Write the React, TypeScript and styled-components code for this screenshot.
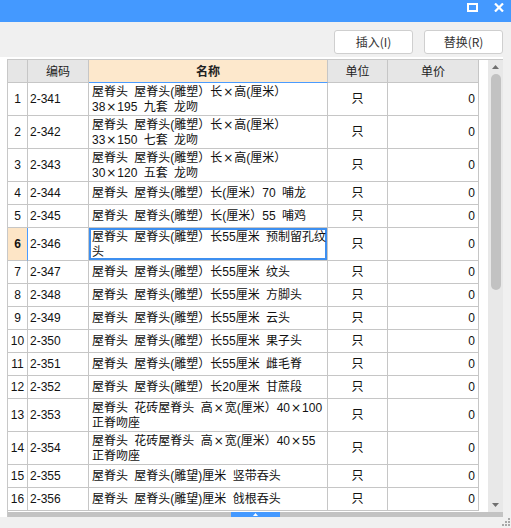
import React from "react";
import styled, { createGlobalStyle, css } from "styled-components";

const Global = createGlobalStyle`
  html, body { margin: 0; padding: 0; background: #f0f0f0; }
  body { font-family: "Liberation Sans", "Noto Sans CJK SC", sans-serif; font-size: 12px; color: #222; }
  * { box-sizing: border-box; }
`;

const Window = styled.div`
  width: 511px;
  height: 528px;
  display: flex;
  flex-direction: column;
  background: #f0f0f0;
  overflow: hidden;
`;

const TitleBar = styled.div`
  height: 22px;
  flex: none;
  background: #4499ff;
  display: flex;
  justify-content: flex-end;
  align-items: flex-start;
  gap: 16px;
  padding: 3px 7px 0 0;
`;

const IconSvg = styled.svg`
  display: block;
`;

const Toolbar = styled.div`
  height: 35px;
  flex: none;
  display: flex;
  justify-content: flex-end;
  align-items: flex-start;
  gap: 11px;
  padding: 8px 8px 0 0;
`;

const Button = styled.button`
  width: 79px;
  height: 24px;
  background: #fff;
  border: 1px solid #cfcfcf;
  border-radius: 3px;
  font-family: "Noto Sans CJK SC", "Noto Sans", sans-serif;
  font-size: 12px;
  color: #333;
  padding: 0;
  line-height: 22px;
`;

const Main = styled.div`
  flex: 1;
  display: flex;
  padding-right: 8px;
  min-height: 0;
`;

const Panel = styled.div`
  flex: 1;
  background: #fff;
  padding: 2px 0 0 7px;
  display: flex;
  min-height: 0;
`;

const Frame = styled.div`
  flex: 1;
  border-left: 1px solid #c8c8c8;
  border-top: 1px solid #c8c8c8;
  display: grid;
  grid-template-columns: 1fr 15px;
  grid-template-rows: 1fr 5px;
  min-height: 0;
`;

const GridArea = styled.div`
  overflow: hidden;
  min-height: 0;
`;

const COLS = "20px 61px 239px 60px 91px";

const Row = styled.div<{ $h: number }>`
  display: grid;
  grid-template-columns: ${COLS};
  height: ${(p) => p.$h}px;
`;

const cellBase = css`
  border-right: 1px solid #c6c6c6;
  border-bottom: 1px solid #c6c6c6;
  display: flex;
  align-items: center;
  white-space: nowrap;
  overflow: hidden;
  line-height: 15px;
  color: #111;
`;

const HeadCell = styled.div<{ $active?: boolean }>`
  ${cellBase};
  justify-content: center;
  font-family: "Noto Sans CJK SC", sans-serif;
  line-height: 16px;
  background: ${(p) => (p.$active ? "#fde8cc" : "#e6e6e6")};
  color: #222;
  font-weight: ${(p) => (p.$active ? 700 : 400)};
  ${(p) => p.$active && css`border-bottom: 1px solid #4a9bff;`}
`;

const NumCell = styled.div<{ $sel?: boolean }>`
  ${cellBase};
  justify-content: center;
  background: ${(p) => (p.$sel ? "#fde5c6" : "#fff")};
  font-weight: ${(p) => (p.$sel ? 700 : 400)};
  ${(p) => p.$sel && css`border-right: 1px solid #4a9bff;`}
`;

const CodeCell = styled.div`
  ${cellBase};
  padding-left: 2px;
`;

const NameCell = styled.div<{ $sel?: boolean }>`
  ${cellBase};
  padding-left: 3px;
  word-spacing: 3px;
  ${(p) => p.$sel && css`box-shadow: inset 0 0 0 2px #3d8ff0;`}
`;

const Lines = styled.div`
  display: flex;
  flex-direction: column;
  padding-top: 1px;
`;

const Line = styled.span`
  display: block;
  height: 15px;
`;

const Times = styled.span`
  display: inline-block;
  width: 12px;
  text-align: center;
  font-family: "DejaVu Sans", sans-serif;
  font-size: 12px;
  line-height: 12px;
`;

const UnitCell = styled.div`
  ${cellBase};
  justify-content: center;
`;

const PriceCell = styled.div`
  ${cellBase};
  justify-content: flex-end;
  padding-right: 3px;
`;

const VScroll = styled.div`
  background: #e8e8e8;
  display: flex;
  flex-direction: column;
  align-items: center;
  padding: 5px 0 5px;
`;

const Thumb = styled.div`
  width: 10px;
  height: 216px;
  margin-top: 5px;
  border-radius: 5px;
  background: #c2c2c2;
`;

const Spacer = styled.div`
  flex: 1;
`;

const HScroll = styled.div`
  grid-column: 1 / span 2;
  background: #c3c3c3;
  display: flex;
  justify-content: center;
`;

const Handle = styled.div`
  width: 49px;
  height: 5px;
  background: #4499ff;
  display: flex;
  justify-content: center;
  align-items: center;
`;

const Footer = styled.div`
  height: 11px;
  flex: none;
  display: flex;
  justify-content: flex-end;
  align-items: flex-end;
  padding: 0 1px 2px 0;
`;

type R = { n: number; code: string; name: string[] };

const A = "屋脊头 屋脊头(雕塑）";
const rows: R[] = [
  { n: 1, code: "2-341", name: [A + "长×高(厘米）", "38×195 九套 龙吻"] },
  { n: 2, code: "2-342", name: [A + "长×高(厘米）", "33×150 七套 龙吻"] },
  { n: 3, code: "2-343", name: [A + "长×高(厘米）", "30×120 五套 龙吻"] },
  { n: 4, code: "2-344", name: [A + "长(厘米）70 哺龙"] },
  { n: 5, code: "2-345", name: [A + "长(厘米）55 哺鸡"] },
  { n: 6, code: "2-346", name: [A + "长55厘米 预制留孔纹", "头"] },
  { n: 7, code: "2-347", name: [A + "长55厘米 纹头"] },
  { n: 8, code: "2-348", name: [A + "长55厘米 方脚头"] },
  { n: 9, code: "2-349", name: [A + "长55厘米 云头"] },
  { n: 10, code: "2-350", name: [A + "长55厘米 果子头"] },
  { n: 11, code: "2-351", name: [A + "长55厘米 雌毛脊"] },
  { n: 12, code: "2-352", name: [A + "长20厘米 甘蔗段"] },
  { n: 13, code: "2-353", name: ["屋脊头 花砖屋脊头 高×宽(厘米）40×100", "正脊吻座"] },
  { n: 14, code: "2-354", name: ["屋脊头 花砖屋脊头 高×宽(厘米）40×55", "正脊吻座"] },
  { n: 15, code: "2-355", name: ["屋脊头 屋脊头(雕望)厘米 竖带吞头"] },
  { n: 16, code: "2-356", name: ["屋脊头 屋脊头(雕望)厘米 戗根吞头"] },
];

const SELECTED = 6;

function renderLine(text: string) {
  const parts = text.split("×");
  const out: React.ReactNode[] = [];
  parts.forEach((p, i) => {
    if (i > 0) out.push(<Times key={"t" + i}>×</Times>);
    out.push(p);
  });
  return out;
}

export default function App() {
  return (
    <>
      <Global />
      <Window>
        <TitleBar>
          <IconSvg width="11" height="9" viewBox="0 0 11 9">
            <rect x="1" y="1" width="9" height="7" fill="none" stroke="#fff" strokeWidth="2" />
          </IconSvg>
          <IconSvg width="10" height="9" viewBox="0 0 10 9">
            <path d="M1 0.5 L9 8.5 M9 0.5 L1 8.5" stroke="#fff" strokeWidth="2.2" />
          </IconSvg>
        </TitleBar>
        <Toolbar>
          <Button>插入(I)</Button>
          <Button>替换(R)</Button>
        </Toolbar>
        <Main>
          <Panel>
            <Frame>
              <GridArea>
                <Row $h={23}>
                  <HeadCell />
                  <HeadCell>编码</HeadCell>
                  <HeadCell $active>名称</HeadCell>
                  <HeadCell>单位</HeadCell>
                  <HeadCell>单价</HeadCell>
                </Row>
                {rows.map((r) => {
                  const sel = r.n === SELECTED;
                  return (
                    <Row key={r.n} $h={r.name.length > 1 ? 33 : 23}>
                      <NumCell $sel={sel}>{r.n}</NumCell>
                      <CodeCell>{r.code}</CodeCell>
                      <NameCell $sel={sel}>
                        <Lines>
                          {r.name.map((l, i) => (
                            <Line key={i}>{renderLine(l)}</Line>
                          ))}
                        </Lines>
                      </NameCell>
                      <UnitCell>只</UnitCell>
                      <PriceCell>0</PriceCell>
                    </Row>
                  );
                })}
              </GridArea>
              <VScroll>
                <IconSvg width="7" height="4" viewBox="0 0 7 4">
                  <path d="M3.5 0 L7 4 L0 4 Z" fill="#6f6f6f" />
                </IconSvg>
                <Thumb />
                <Spacer />
                <IconSvg width="7" height="4" viewBox="0 0 7 4">
                  <path d="M0 0 L7 0 L3.5 4 Z" fill="#6f6f6f" />
                </IconSvg>
              </VScroll>
              <HScroll>
                <Handle>
                  <IconSvg width="5" height="3" viewBox="0 0 5 3">
                    <path d="M2.5 0 L5 3 L0 3 Z" fill="#fff" />
                  </IconSvg>
                </Handle>
              </HScroll>
            </Frame>
          </Panel>
        </Main>
        <Footer>
          <IconSvg width="8" height="8" viewBox="0 0 8 8">
            <g fill="#a8a8a8">
              <rect x="6" y="0" width="2" height="2" />
              <rect x="3" y="3" width="2" height="2" />
              <rect x="6" y="3" width="2" height="2" />
              <rect x="0" y="6" width="2" height="2" />
              <rect x="3" y="6" width="2" height="2" />
              <rect x="6" y="6" width="2" height="2" />
            </g>
          </IconSvg>
        </Footer>
      </Window>
    </>
  );
}
